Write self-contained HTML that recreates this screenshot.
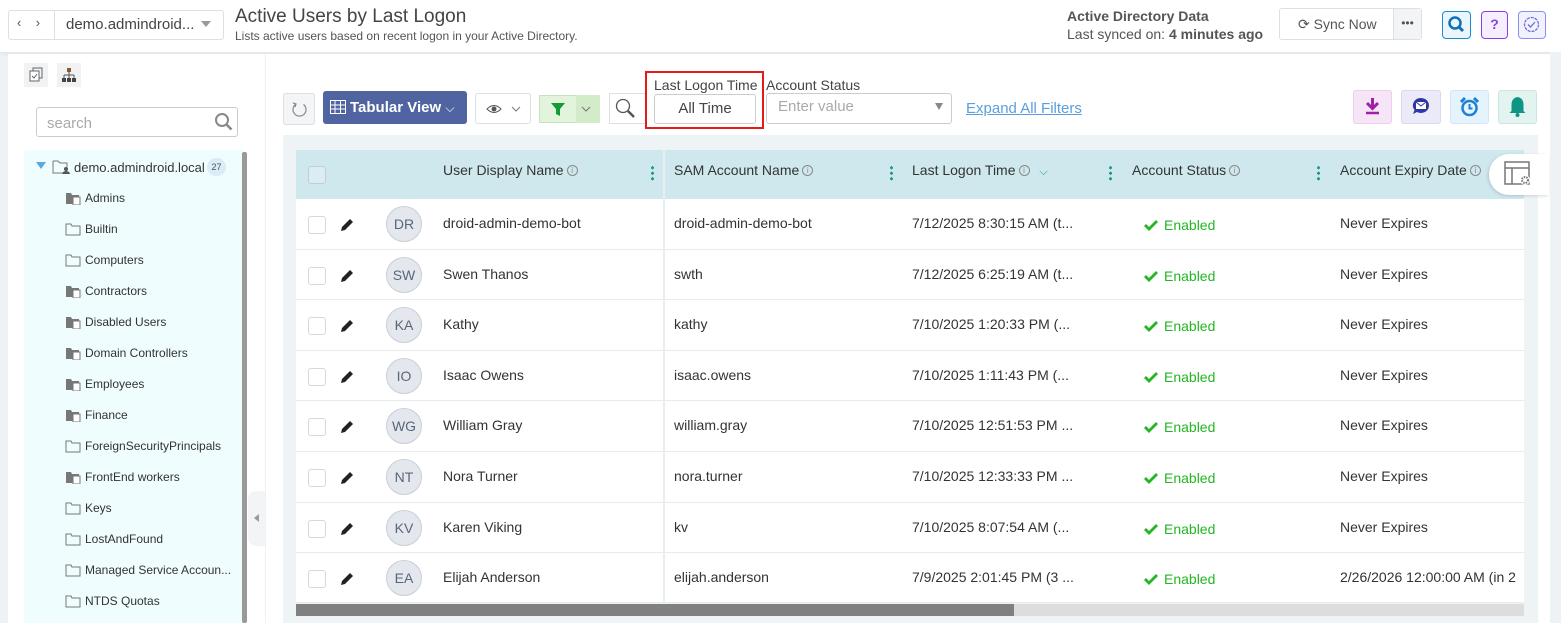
<!DOCTYPE html>
<html><head><meta charset="utf-8">
<style>
*{box-sizing:border-box;margin:0;padding:0}
body{width:1561px;height:623px;overflow:hidden;background:#eef2f5;font-family:"Liberation Sans",sans-serif;color:#333;position:relative;font-size:14px}
.a{position:absolute}
.hdr{left:0;top:0;width:1561px;height:52px;background:#fff;box-shadow:0 2px 4px rgba(0,0,0,.06)}
.box{border:1px solid #dcdfe3;border-radius:3px;background:#fff}
.tree div{position:absolute;left:85px;font-size:12px;color:#333;height:16px;line-height:16px}
.tree svg{position:absolute;left:-20px;top:1px}
.row{position:absolute;left:296px;width:1228px;height:50px;background:#fff;border-bottom:1px solid #e8ebee}
.row span{position:absolute;top:16px;font-size:14px;color:#333;white-space:nowrap}
.cb{position:absolute;left:12px;top:17px;width:18px;height:18px;border:1.5px solid #d5d8dc;border-radius:3px;background:#fff}
.av{position:absolute;left:90px;top:7px;width:36px;height:36px;border-radius:50%;background:#e4e8ee;border:1px solid #c8ced6;font-size:14px;color:#5a6677;text-align:center;line-height:34px}
.en{color:#23b623!important;top:18px!important}
.hcol{position:absolute;top:12px;font-size:14px;color:#333;white-space:nowrap}
.dots{position:absolute;top:16px;width:3px;height:16px;background:radial-gradient(circle,#1a9a8e 1.5px,transparent 1.6px) 0 0/3px 5.5px repeat-y}
.info{display:inline-block;width:11px;height:11px;border:1px solid #888;border-radius:50%;font-size:8px;line-height:9px;text-align:center;color:#888;vertical-align:2px;margin-left:3px}
</style></head><body>
<div class="a hdr"></div>
<div class="a box" style="left:8px;top:10px;width:216px;height:30px"></div>
<div class="a" style="left:54px;top:11px;width:1px;height:28px;background:#dcdfe3"></div>
<div class="a" style="left:17px;top:15px;font-size:13px;color:#555">‹&nbsp;&nbsp;&nbsp;&nbsp;›</div>
<div class="a" style="left:66px;top:16px;font-size:15px;color:#444">demo.admindroid...</div>
<div class="a" style="left:201px;top:21px;border:5px solid transparent;border-top:6px solid #999"></div>
<div class="a" style="left:235px;top:6px;font-size:19px;color:#444">Active Users by Last Logon</div>
<div class="a" style="left:235px;top:29px;font-size:12px;color:#555">Lists active users based on recent logon in your Active Directory.</div>
<div class="a" style="left:1067px;top:8px;font-size:14px;color:#555;font-weight:bold">Active Directory Data</div>
<div class="a" style="left:1067px;top:26px;font-size:14px;color:#555">Last synced on: <b>4 minutes ago</b></div>
<div class="a box" style="left:1279px;top:8px;width:143px;height:32px"></div>
<div class="a" style="left:1393px;top:9px;width:28px;height:30px;background:#f2f4f6;border-left:1px solid #dcdfe3;text-align:center;font-size:12px;line-height:28px;color:#555">•••</div>
<div class="a" style="left:1298px;top:16px;font-size:14px;color:#555">⟳ Sync Now</div>
<div class="a" style="left:1442px;top:11px;width:29px;height:28px;border:1.5px solid #1d8bd1;border-radius:4px;background:#eaf5fc"><svg width="26" height="25"><circle cx="12" cy="11" r="5.5" stroke="#0f6fb8" stroke-width="2.5" fill="none"/><path d="M16 15l4 4" stroke="#0f6fb8" stroke-width="3"/></svg></div>
<div class="a" style="left:1481px;top:11px;width:27px;height:28px;border:1.5px solid #8a3fe0;border-radius:4px;background:#f5eefe;text-align:center;color:#8a3fe0;font-weight:bold;line-height:25px">?</div>
<div class="a" style="left:1518px;top:11px;width:28px;height:28px;border:1.5px solid #8c8ff0;border-radius:4px;background:#f2f2fe"><svg width="25" height="25"><circle cx="12.5" cy="12.5" r="7" stroke="#6a6ee0" stroke-width="1.3" fill="none" stroke-dasharray="3 1"/><path d="M9 12.5l2.5 2.5 4.5-5" stroke="#6a6ee0" stroke-width="1.3" fill="none"/></svg></div>

<!-- sidebar -->
<div class="a" style="left:8px;top:54px;width:257px;height:569px;background:#fff"></div>
<div class="a" style="left:24px;top:63px;width:24px;height:24px;background:#f0f2f4;text-align:center"><svg width="24" height="24"><rect x="9" y="5" width="9" height="10" fill="none" stroke="#666"/><rect x="6" y="8" width="9" height="10" fill="#fff" stroke="#666"/><path d="M8 13l2 2 3-4" stroke="#666" fill="none"/></svg></div>
<div class="a" style="left:57px;top:63px;width:24px;height:24px;background:#f0f2f4"><svg width="24" height="24"><rect x="10" y="5" width="4" height="4" fill="#8a5a2a"/><path d="M12 9v3M7 12h10M7 12v3M17 12v3M12 12v3" stroke="#555"/><rect x="5" y="15" width="4" height="4" fill="#444"/><rect x="10" y="15" width="4" height="4" fill="#444"/><rect x="15" y="15" width="4" height="4" fill="#444"/></svg></div>
<div class="a box" style="left:36px;top:107px;width:202px;height:30px;border-color:#ccc"></div>
<div class="a" style="left:47px;top:115px;font-size:15px;color:#aaa">search</div>
<svg class="a" style="left:213px;top:111px" width="22" height="22"><circle cx="9" cy="9" r="6" stroke="#888" stroke-width="2" fill="none"/><path d="M13.5 13.5l5 5" stroke="#888" stroke-width="2.5"/></svg>
<div class="a" style="left:24px;top:150px;width:219px;height:473px;background:#effdfe;border-radius:3px 0 0 0"></div>
<div class="a" style="left:242px;top:152px;width:5px;height:471px;background:#999;border-radius:2px"></div>
<div class="a" style="left:248px;top:491px;width:17px;height:55px;background:#f2f4f6;border-radius:8px 0 0 8px"></div>
<div class="a" style="left:254px;top:514px;border:4px solid transparent;border-right:5px solid #999;border-left:0"></div>
<div class="a" style="left:36px;top:162px;border:5px solid transparent;border-top:7px solid #5aa8e0"></div>
<svg class="a" style="left:52px;top:159px" width="20" height="16"><path d="M1 2h5l2 2h7v4M1 2v12h9" fill="none" stroke="#777"/><circle cx="14" cy="10" r="2" fill="#555"/><path d="M10 15a4 3 0 0 1 8 0z" fill="#555"/></svg>
<div class="a" style="left:74px;top:160px;font-size:13px;color:#333">demo.admindroid.local</div>
<div class="a" style="left:207px;top:158px;width:19px;height:18px;border-radius:9px;background:#dbecf7;font-size:9px;text-align:center;line-height:18px;color:#456">27</div>
<div class="tree">
<div style="top:190px"><svg width="17" height="14"><path d="M1 2h5l1 2h7v9H1z" fill="#777"/><rect x="8" y="6" width="7" height="8" fill="#fff" stroke="#777"/></svg>Admins</div>
<div style="top:221px"><svg width="17" height="14"><path d="M1 2h5l1 2h8v9H1z" fill="none" stroke="#777"/></svg>Builtin</div>
<div style="top:252px"><svg width="17" height="14"><path d="M1 2h5l1 2h8v9H1z" fill="none" stroke="#777"/></svg>Computers</div>
<div style="top:283px"><svg width="17" height="14"><path d="M1 2h5l1 2h7v9H1z" fill="#777"/><rect x="8" y="6" width="7" height="8" fill="#fff" stroke="#777"/></svg>Contractors</div>
<div style="top:314px"><svg width="17" height="14"><path d="M1 2h5l1 2h7v9H1z" fill="#777"/><rect x="8" y="6" width="7" height="8" fill="#fff" stroke="#777"/></svg>Disabled Users</div>
<div style="top:345px"><svg width="17" height="14"><path d="M1 2h5l1 2h7v9H1z" fill="#777"/><rect x="8" y="6" width="7" height="8" fill="#fff" stroke="#777"/></svg>Domain Controllers</div>
<div style="top:376px"><svg width="17" height="14"><path d="M1 2h5l1 2h7v9H1z" fill="#777"/><rect x="8" y="6" width="7" height="8" fill="#fff" stroke="#777"/></svg>Employees</div>
<div style="top:407px"><svg width="17" height="14"><path d="M1 2h5l1 2h7v9H1z" fill="#777"/><rect x="8" y="6" width="7" height="8" fill="#fff" stroke="#777"/></svg>Finance</div>
<div style="top:438px"><svg width="17" height="14"><path d="M1 2h5l1 2h8v9H1z" fill="none" stroke="#777"/></svg>ForeignSecurityPrincipals</div>
<div style="top:469px"><svg width="17" height="14"><path d="M1 2h5l1 2h7v9H1z" fill="#777"/><rect x="8" y="6" width="7" height="8" fill="#fff" stroke="#777"/></svg>FrontEnd workers</div>
<div style="top:500px"><svg width="17" height="14"><path d="M1 2h5l1 2h8v9H1z" fill="none" stroke="#777"/></svg>Keys</div>
<div style="top:531px"><svg width="17" height="14"><path d="M1 2h5l1 2h8v9H1z" fill="none" stroke="#777"/></svg>LostAndFound</div>
<div style="top:562px"><svg width="17" height="14"><path d="M1 2h5l1 2h8v9H1z" fill="none" stroke="#777"/></svg>Managed Service Accoun...</div>
<div style="top:593px"><svg width="17" height="14"><path d="M1 2h5l1 2h8v9H1z" fill="none" stroke="#777"/></svg>NTDS Quotas</div>
</div>

<!-- main -->
<div class="a" style="left:266px;top:54px;width:1284px;height:569px;background:#fff"></div>
<div class="a box" style="left:283px;top:93px;width:32px;height:32px;background:#f4f5f7"><svg width="30" height="30"><path d="M19.5 10.5a6.5 6.5 0 1 1-8 0" fill="none" stroke="#888" stroke-width="1.2"/><path d="M9 9l3 1-1 3" fill="none" stroke="#888" stroke-width="1.2"/></svg></div>
<div class="a" style="left:323px;top:91px;width:144px;height:33px;background:#4f64a0;border-radius:3px;color:#fff;font-weight:bold;font-size:15px;line-height:33px;padding-left:27px">Tabular View <span style="font-weight:normal;font-size:12px">⌵</span></div>
<svg class="a" style="left:330px;top:100px" width="16" height="14"><rect x="0.5" y="0.5" width="15" height="13" fill="none" stroke="#fff"/><path d="M0 5h16M0 9h16M5 0v14M10.5 0v14" stroke="#fff"/></svg>
<div class="a box" style="left:475px;top:93px;width:56px;height:31px"></div>
<svg class="a" style="left:486px;top:102px" width="40" height="14"><path d="M1 7q7-7 14 0q-7 7-14 0z" fill="none" stroke="#555"/><circle cx="8" cy="7" r="2.5" fill="#555"/><path d="M26 5l4 4 4-4" stroke="#777" fill="none"/></svg>
<div class="a" style="left:539px;top:95px;width:61px;height:28px;background:#e3f4dc;border:1px solid #c7e3bb"></div>
<div class="a" style="left:576px;top:95px;width:24px;height:28px;background:#d2ebc8"></div>
<svg class="a" style="left:550px;top:101px" width="48" height="16"><path d="M1 2h14l-5 6v7l-4-2V8z" fill="#159a35"/><path d="M32 6l4 4 4-4" stroke="#777" fill="none"/></svg>
<div class="a" style="left:609px;top:93px;width:36px;height:31px;border:1px solid #dcdfe3;border-right:0;background:#fff"></div>
<svg class="a" style="left:614px;top:97px" width="24" height="24"><circle cx="9" cy="9" r="6.5" stroke="#555" stroke-width="1.3" fill="none"/><path d="M14 14l6 6" stroke="#555" stroke-width="2.5"/></svg>
<div class="a" style="left:645px;top:71px;width:119px;height:58px;border:2px solid #e41b1b"></div>
<div class="a" style="left:654px;top:77px;font-size:14px;color:#444">Last Logon Time</div>
<div class="a box" style="left:654px;top:94px;width:102px;height:30px;text-align:center;line-height:28px;font-size:15px;color:#444;border-color:#ccc">All Time</div>
<div class="a" style="left:766px;top:77px;font-size:14px;color:#444">Account Status</div>
<div class="a box" style="left:766px;top:93px;width:186px;height:31px;border-color:#ccc"></div>
<div class="a" style="left:778px;top:98px;font-size:15px;color:#aaa">Enter value</div>
<div class="a" style="left:935px;top:103px;border:4px solid transparent;border-top:7px solid #888"></div>
<div class="a" style="left:966px;top:100px;font-size:15px;color:#5a9ee0;text-decoration:underline">Expand All Filters</div>
<div class="a" style="left:1353px;top:90px;width:39px;height:34px;background:#f6e4f7;border:1px solid #ead0ed;border-radius:3px"><svg width="37" height="32"><path d="M18.5 7v10M13 12l5.5 5.5 5.5-5.5" stroke="#a020a8" stroke-width="3" fill="none"/><path d="M12 22h13" stroke="#a020a8" stroke-width="2.5"/></svg></div>
<div class="a" style="left:1401px;top:90px;width:40px;height:34px;background:#eaeaf8;border:1px solid #d8d8ef;border-radius:3px"><svg width="38" height="32"><path d="M19 7a8 7.5 0 1 1-4 14l-4 2 1.5-4A8 7.5 0 0 1 19 7z" fill="#3038a0"/><rect x="14" y="11" width="10" height="7" fill="#fff"/><path d="M14 11l5 4 5-4" stroke="#3038a0" fill="none"/></svg></div>
<div class="a" style="left:1450px;top:90px;width:39px;height:34px;background:#e5f3fd;border:1px solid #d1e6f6;border-radius:3px"><svg width="37" height="32"><circle cx="18.5" cy="17" r="7" fill="none" stroke="#1b80d6" stroke-width="2.5"/><path d="M18.5 13v4.5h3" stroke="#1b80d6" stroke-width="2" fill="none"/><path d="M10 11l4-4M27 11l-4-4" stroke="#1b80d6" stroke-width="3"/></svg></div>
<div class="a" style="left:1498px;top:90px;width:39px;height:34px;background:#e3f3f0;border:1px solid #cce6e1;border-radius:3px"><svg width="37" height="32"><path d="M18.5 6q6 1 6 8v6l2 2h-16l2-2v-6q0-7 6-8z" fill="#0e9584"/><circle cx="18.5" cy="24" r="2" fill="#0e9584"/></svg></div>

<!-- table -->
<div class="a" style="left:283px;top:135px;width:1255px;height:488px;background:#eef3f6"></div>
<div class="a" style="left:296px;top:150px;width:1228px;height:49px;background:#cfe8ee"></div>
<div class="a" style="left:308px;top:166px;width:18px;height:18px;border:1.5px solid #c5ccd2;border-radius:3px;background:#d9edf2"></div>
<div class="hcol" style="left:443px;top:162px">User Display Name<span class="info">i</span></div>
<div class="dots" style="left:651px;top:165px"></div>
<div class="hcol" style="left:674px;top:162px">SAM Account Name<span class="info">i</span></div>
<div class="dots" style="left:890px;top:165px"></div>
<div class="hcol" style="left:912px;top:162px">Last Logon Time<span class="info">i</span> <span style="color:#1a9a8e;font-size:11px;margin-left:6px">⌵</span></div>
<div class="dots" style="left:1109px;top:165px"></div>
<div class="hcol" style="left:1132px;top:162px">Account Status<span class="info">i</span></div>
<div class="dots" style="left:1317px;top:165px"></div>
<div class="hcol" style="left:1340px;top:162px">Account Expiry Date<span class="info">i</span></div>
<div class="a" style="left:1489px;top:154px;width:60px;height:41px;background:#fff;border-radius:20px 0 0 20px;box-shadow:-1px 1px 3px rgba(0,0,0,.15)"></div>
<svg class="a" style="left:1503px;top:160px" width="30" height="28"><rect x="2" y="2" width="24" height="22" fill="none" stroke="#777" stroke-width="1.5"/><path d="M2 8h24M9 8v16" stroke="#777" stroke-width="1.5"/><circle cx="22" cy="20" r="5" fill="#fff"/><circle cx="22" cy="20" r="3" fill="none" stroke="#777" stroke-width="2" stroke-dasharray="1.5 1"/></svg>

<div id="rows"></div>
<div class="a" style="left:663px;top:150px;width:2px;height:454px;background:#e9eef1"></div>
<div class="a" style="left:296px;top:604px;width:1228px;height:12px;background:#ddd"></div>
<div class="a" style="left:296px;top:604px;width:718px;height:12px;background:#808080"></div>
<div class="a" style="left:1550px;top:52px;width:11px;height:571px;background:#eef2f5"></div>

<script>
var d=[["DR","droid-admin-demo-bot","droid-admin-demo-bot","7/12/2025 8:30:15 AM (t...","Never Expires"],
["SW","Swen Thanos","swth","7/12/2025 6:25:19 AM (t...","Never Expires"],
["KA","Kathy","kathy","7/10/2025 1:20:33 PM (...","Never Expires"],
["IO","Isaac Owens","isaac.owens","7/10/2025 1:11:43 PM (...","Never Expires"],
["WG","William Gray","william.gray","7/10/2025 12:51:53 PM ...","Never Expires"],
["NT","Nora Turner","nora.turner","7/10/2025 12:33:33 PM ...","Never Expires"],
["KV","Karen Viking","kv","7/10/2025 8:07:54 AM (...","Never Expires"],
["EA","Elijah Anderson","elijah.anderson","7/9/2025 2:01:45 PM (3 ...","2/26/2026 12:00:00 AM (in 2"]];
var h="";
d.forEach(function(r,i){var t=199+i*50.6;
h+='<div class="row" style="top:'+t+'px;height:'+(i==7?50:50.6)+'px"><div class="cb"></div>'+
'<svg style="position:absolute;left:43px;top:18px" width="16" height="16"><path d="M2 14l1-4 8-8 3 3-8 8z" fill="#222"/></svg>'+
'<div class="av">'+r[0]+'</div><span style="left:147px">'+r[1]+'</span><span style="left:378px">'+r[2]+'</span><span style="left:616px">'+r[3]+'</span>'+
'<svg style="position:absolute;left:848px;top:20px" width="14" height="12"><path d="M1 6l4 4 8-8" stroke="#23b623" stroke-width="2.8" fill="none"/></svg><span class="en" style="left:868px">Enabled</span><span style="left:1044px;overflow:hidden;width:184px">'+r[4]+'</span></div>';});
document.getElementById("rows").innerHTML=h;
</script>
</body></html>
